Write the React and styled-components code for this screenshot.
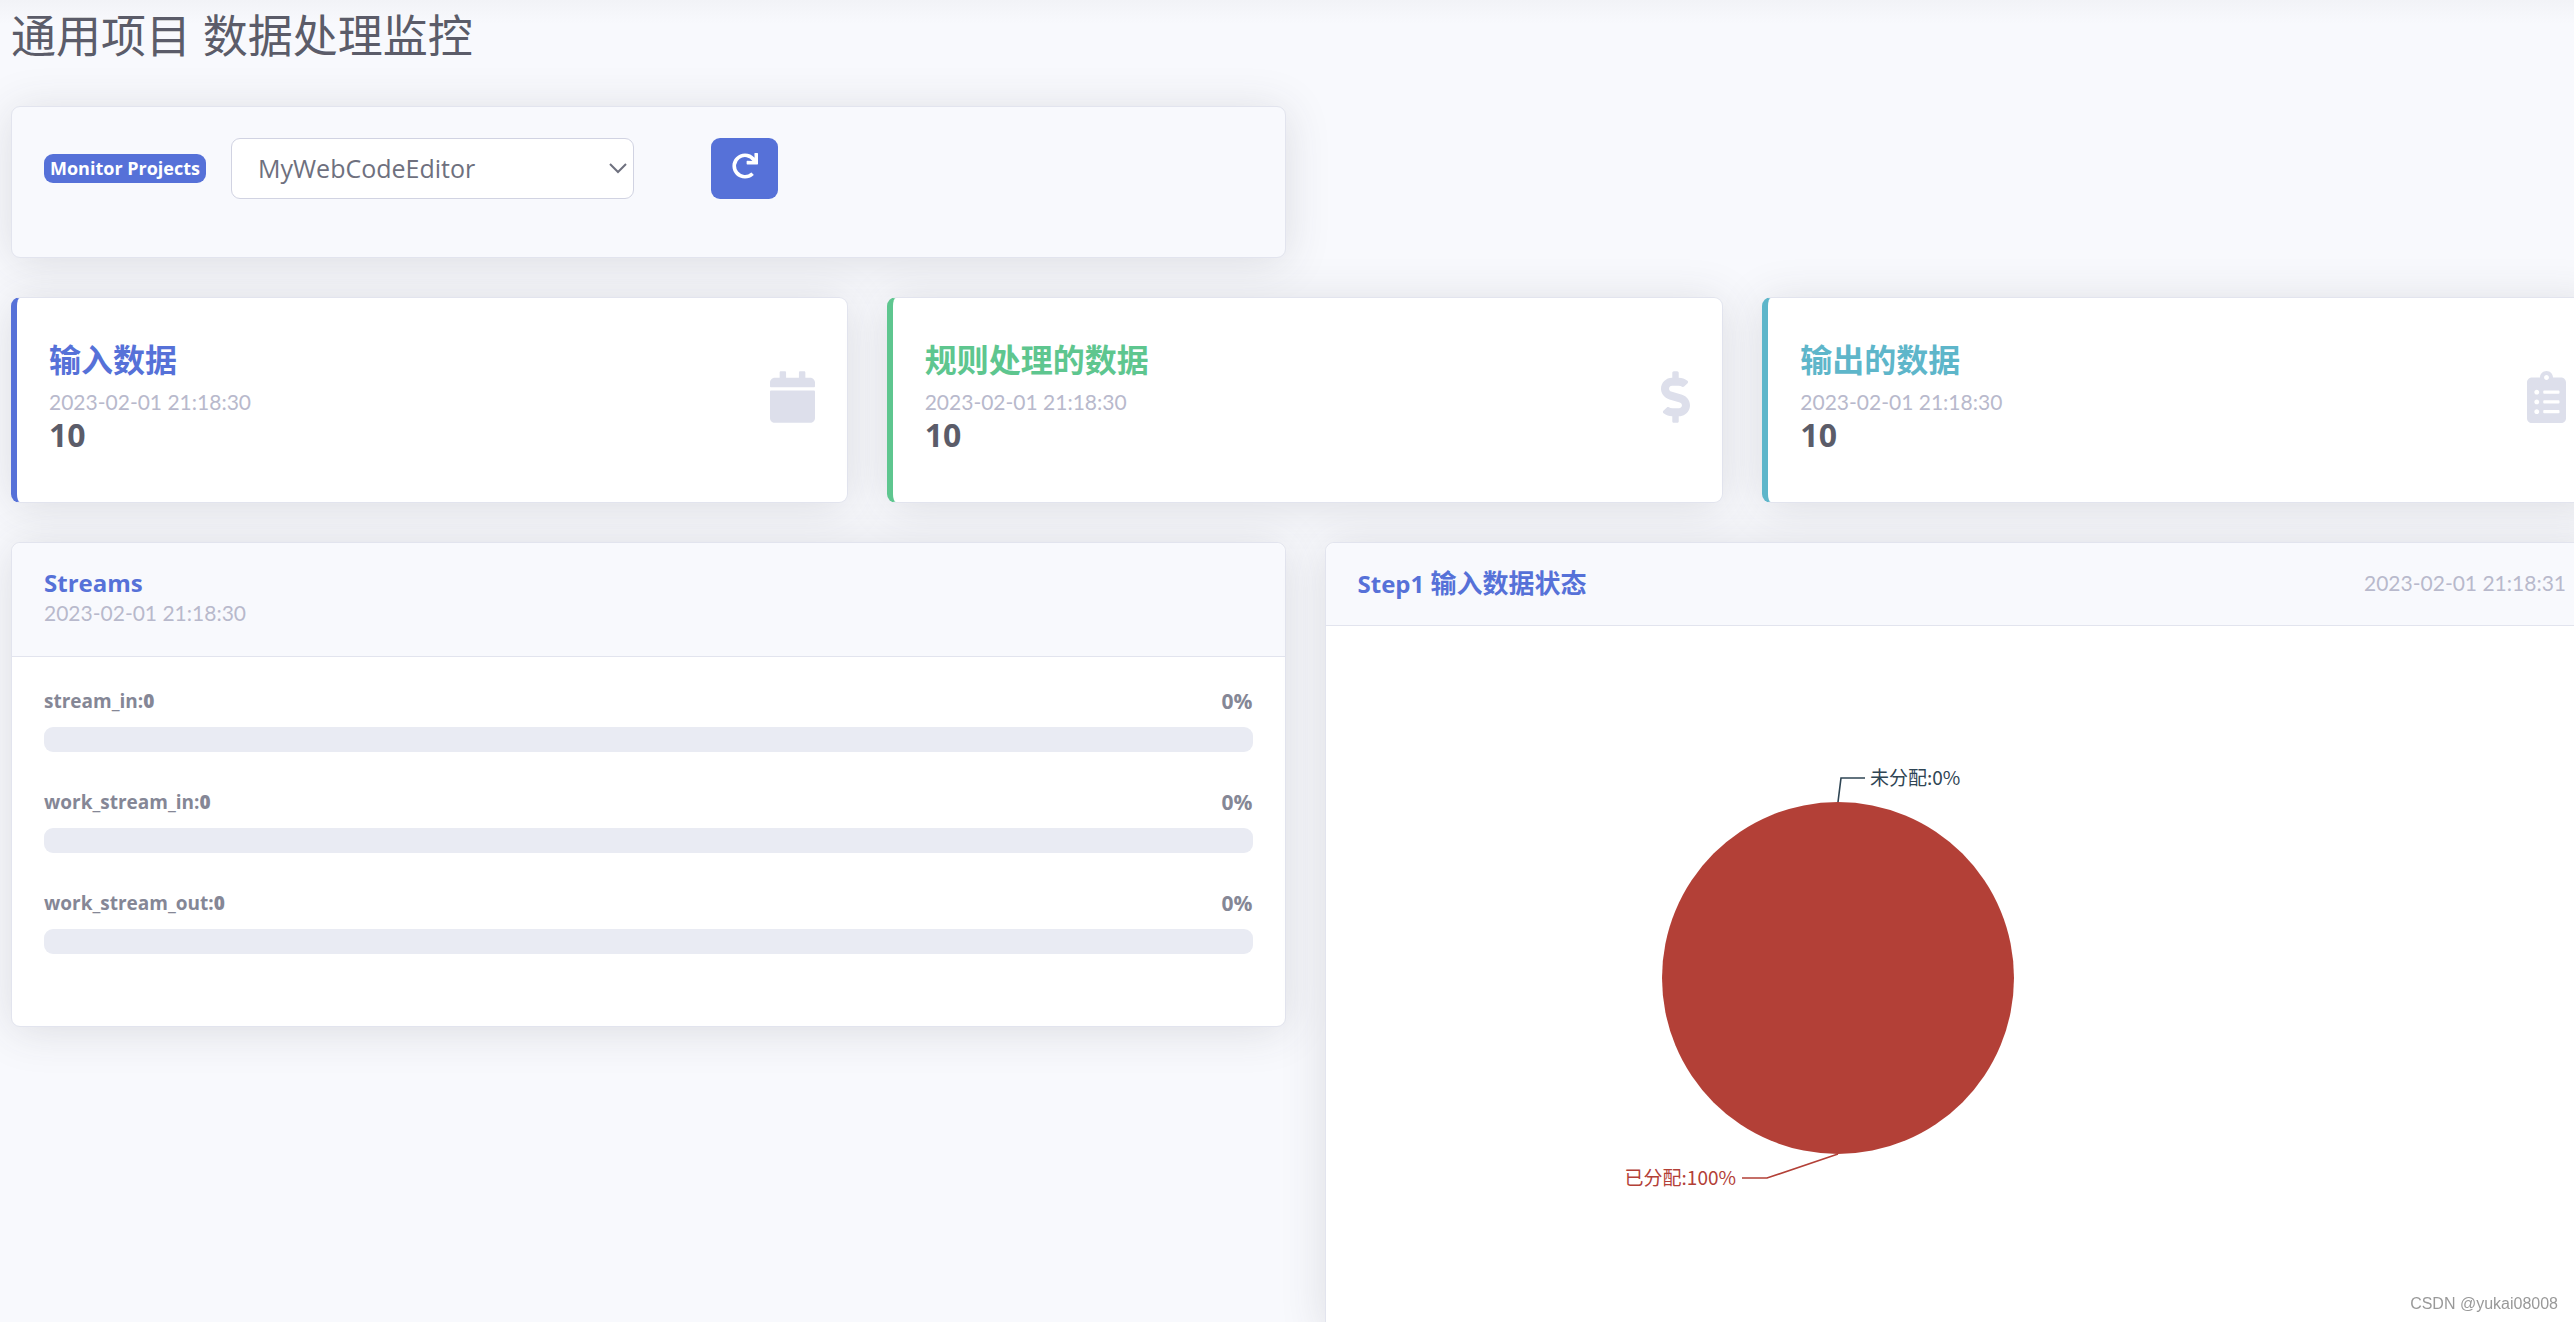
import React from "react";
import styled, { createGlobalStyle } from "styled-components";
import { FaCalendar, FaClipboardList, FaDollarSign, FaRedo } from "react-icons/fa";

const color = {
  primary: "#5671d8",
  success: "#5ec68f",
  info: "#5eb6ca",
  page: "#f8f9fd",
  line: "#e2e4ee",
  heading: "#5b5c69",
  body: "#6e707e",
  label: "#858796",
  muted: "#b8b9cc",
  icon: "#dddfeb",
  track: "#e9ebf3",
};

const GlobalStyle = createGlobalStyle`
  *, *::before, *::after { box-sizing: border-box; }
  html, body { margin: 0; overflow: hidden; }
  body {
    background: ${color.page};
    color: ${color.label};
    font-family: "Open Sans", "Noto Sans CJK SC", sans-serif;
    font-size: 26px;
    line-height: 32px;
  }
`;

const Page = styled.main`
  min-height: 100vh;
  padding: 9px 0 0 11px;
  margin-right: -25px;
  background: linear-gradient(#f2f3f7, ${color.page}) top / 100% 24px no-repeat;
`;

const PageTitle = styled.h1`
  margin: 0 0 43px;
  color: ${color.heading};
  font-size: 45px;
  font-weight: 400;
  line-height: 54px;
`;

const Row = styled.div`
  display: grid;
  grid-template-columns: repeat(${(p) => p.$columns}, minmax(0, 1fr));
  gap: 39px;
  align-items: start;

  & + & {
    margin-top: 39px;
  }
`;

const Card = styled.section`
  background: #fff;
  border: 1px solid ${color.line};
  border-radius: 9px;
  box-shadow: 0 4px 45px rgba(58, 59, 69, 0.15);
`;

const FilterCard = styled(Card)`
  display: flex;
  align-items: flex-start;
  min-height: 152px;
  padding: 31px 32px;
  background: ${color.page};
`;

const FilterForm = styled.form`
  display: flex;
  align-items: center;
`;

const Badge = styled.label`
  margin-right: 25px;
  padding: 0 6px;
  border-radius: 9px;
  background: ${color.primary};
  color: #fff;
  font-size: 18px;
  font-weight: 700;
  line-height: 29px;
`;

const SelectWrap = styled.div`
  position: relative;
  width: 403px;
  margin-right: 77px;
`;

const Select = styled.select`
  appearance: none;
  display: block;
  width: 100%;
  height: 61px;
  padding: 0 40px 2px 26px;
  border: 1px solid #d1d3e2;
  border-radius: 9px;
  background: #fff;
  color: ${color.body};
  font-family: inherit;
  font-size: 25px;
`;

const Chevron = styled.svg`
  position: absolute;
  top: 25px;
  right: 7px;
  width: 18px;
  height: 11px;
  fill: none;
  stroke: ${color.body};
  stroke-width: 2;
  pointer-events: none;
`;

const RefreshButton = styled.button`
  display: flex;
  align-items: center;
  justify-content: center;
  width: 67px;
  height: 61px;
  padding: 0 0 5px;
  border: 0;
  border-radius: 9px;
  background: ${color.primary};
  color: #fff;
  font-size: 26px;
`;

const StatCard = styled(Card)`
  display: flex;
  align-items: flex-start;
  min-height: 206px;
  padding: 38px 32px;
  border-left: 6px solid ${(p) => p.$accent};
`;

const StatBody = styled.div`
  flex: 1;
  display: flex;
  align-items: center;
  justify-content: space-between;
`;

const StatIcon = styled.span`
  display: flex;

  svg {
    width: ${(p) => p.$width}px;
    height: 52px;
    color: ${color.icon};
  }
`;

const StatTitle = styled.h2`
  margin: 0 0 2px;
  color: ${(p) => p.$accent};
  font-size: 32px;
  font-weight: 700;
  line-height: 48px;
`;

const StatValue = styled.div`
  padding-bottom: 6px;
  color: ${color.heading};
  font-size: 32px;
  font-weight: 700;
  line-height: 34px;
`;

const Timestamp = styled.time`
  display: block;
  color: ${color.muted};
  font-family: Lato, sans-serif;
  font-size: 21px;
  line-height: ${(p) => (p.$tight ? 28 : 32)}px;
`;

const CardHeader = styled.header`
  display: flex;
  flex-direction: ${(p) => (p.$inline ? "row" : "column")};
  justify-content: space-between;
  min-height: ${(p) => (p.$inline ? 83 : 114)}px;
  padding: 24px 32px 0;
  border-bottom: 1px solid ${color.line};
  border-radius: 9px 9px 0 0;
  background: ${color.page};
  ${(p) => !p.$inline && "justify-content: flex-start;"}
`;

const CardTitle = styled.h2`
  margin: 0;
  color: ${color.primary};
  font-size: 24px;
  font-weight: 700;
  line-height: 32px;
`;

const Han = styled.span`
  font-size: 26px;
`;

const StreamList = styled.div`
  padding: 32px 32px 34px;
`;

const Stream = styled.div`
  margin-bottom: 38px;
`;

const StreamLabel = styled.div`
  display: flex;
  justify-content: space-between;
  margin-bottom: 14px;
  font-size: 19px;
  font-weight: 700;
  line-height: 24px;

  strong {
    font-weight: 800;
  }
`;

const StreamPercent = styled.span`
  font-size: 21px;
`;

const Track = styled.div`
  height: 25px;
  overflow: hidden;
  border-radius: 9px;
  background: ${color.track};
`;

const TrackFill = styled.div`
  height: 100%;
  background: ${color.primary};
`;

const ChartBody = styled.div`
  padding: 32px;
`;

const Chart = styled.svg`
  display: block;
  width: 960px;
  height: 640px;
  font-family: "Noto Sans CJK SC", sans-serif;
  font-size: 19px;
`;

const Leader = styled.polyline`
  fill: none;
  stroke: ${(p) => p.$tone};
  stroke-width: 1.6;
`;

const Watermark = styled.div`
  position: fixed;
  right: 16px;
  bottom: 8px;
  color: #999;
  font-family: "Liberation Sans", sans-serif;
  font-size: 16px;
  line-height: 20px;
  text-shadow: 1px 1px 1px #fff;
`;

const stats = [
  { title: "输入数据", accent: color.primary, Icon: FaCalendar, iconWidth: 45 },
  { title: "规则处理的数据", accent: color.success, Icon: FaDollarSign, iconWidth: 29 },
  { title: "输出的数据", accent: color.info, Icon: FaClipboardList, iconWidth: 39 },
];

const streams = [
  { name: "stream_in", count: 0, percent: 0 },
  { name: "work_stream_in", count: 0, percent: 0 },
  { name: "work_stream_out", count: 0, percent: 0 },
];

function Filter() {
  return (
    <FilterCard>
      <FilterForm onSubmit={(e) => e.preventDefault()}>
        <Badge htmlFor="project">Monitor Projects</Badge>
        <SelectWrap>
          <Select id="project" defaultValue="MyWebCodeEditor">
            <option>MyWebCodeEditor</option>
          </Select>
          <Chevron viewBox="0 0 18 11" aria-hidden="true">
            <path d="M1 1l8 8 8-8" />
          </Chevron>
        </SelectWrap>
        <RefreshButton type="submit" aria-label="Refresh">
          <FaRedo />
        </RefreshButton>
      </FilterForm>
    </FilterCard>
  );
}

function Stat({ title, accent, Icon, iconWidth }) {
  return (
    <StatCard $accent={accent}>
      <StatBody>
        <div>
          <StatTitle $accent={accent}>{title}</StatTitle>
          <Timestamp>2023-02-01 21:18:30</Timestamp>
          <StatValue>10</StatValue>
        </div>
        <StatIcon $width={iconWidth}>
          <Icon aria-hidden="true" />
        </StatIcon>
      </StatBody>
    </StatCard>
  );
}

function Streams() {
  return (
    <Card>
      <CardHeader>
        <CardTitle>Streams</CardTitle>
        <Timestamp $tight>2023-02-01 21:18:30</Timestamp>
      </CardHeader>
      <StreamList>
        {streams.map((s) => (
          <Stream key={s.name}>
            <StreamLabel>
              <span>
                {s.name}:<strong>{s.count}</strong>
              </span>
              <StreamPercent>{s.percent}%</StreamPercent>
            </StreamLabel>
            <Track role="progressbar" aria-label={s.name} aria-valuenow={s.percent}>
              <TrackFill style={{ width: `${s.percent}%` }} />
            </Track>
          </Stream>
        ))}
      </StreamList>
    </Card>
  );
}

function InputStatus() {
  return (
    <Card>
      <CardHeader $inline>
        <CardTitle>
          Step1 <Han>输入数据状态</Han>
        </CardTitle>
        <Timestamp>2023-02-01 21:18:31</Timestamp>
      </CardHeader>
      <ChartBody>
        <Chart viewBox="0 0 960 640">
          <circle cx="480" cy="320" r="176" fill="#b34037" />
          <Leader $tone="#2f4554" points="480,144 483,120 507,120" />
          <text x="512" y="127" fill="#2f4554">未分配:0%</text>
          <Leader $tone="#b34037" points="480,496 409,520 384,520" />
          <text x="378" y="527" fill="#b34037" textAnchor="end">已分配:100%</text>
        </Chart>
      </ChartBody>
    </Card>
  );
}

export default function App() {
  return (
    <>
      <GlobalStyle />
      <Page>
        <PageTitle>通用项目 数据处理监控</PageTitle>
        <Row $columns={2}>
          <Filter />
        </Row>
        <Row $columns={3}>
          {stats.map((s) => (
            <Stat key={s.title} {...s} />
          ))}
        </Row>
        <Row $columns={2}>
          <Streams />
          <InputStatus />
        </Row>
      </Page>
      <Watermark>CSDN @yukai08008</Watermark>
    </>
  );
}
